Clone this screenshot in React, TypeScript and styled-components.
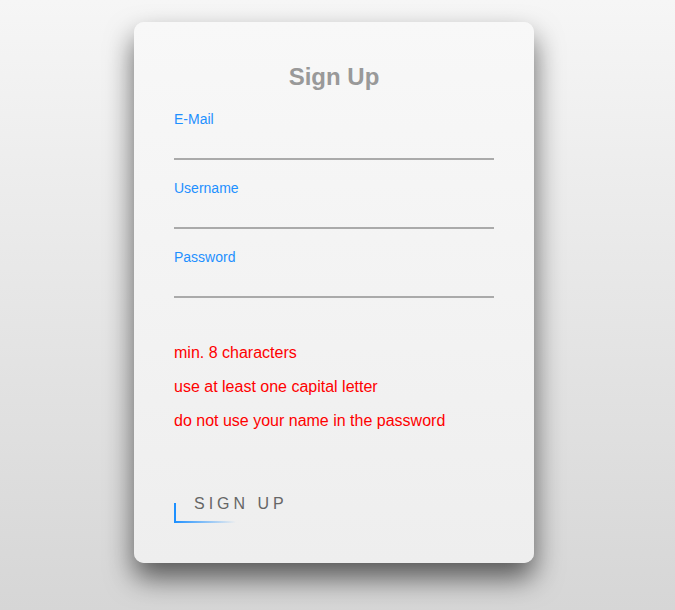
import React from "react";
import styled, { createGlobalStyle } from "styled-components";

const Global = createGlobalStyle`
  html, body { margin: 0; padding: 0; }
  body {
    min-height: 610px;
    background: linear-gradient(to bottom, #f6f6f6 0%, #d6d6d6 100%);
    font-family: "Liberation Sans", Arial, sans-serif;
  }
`;

const Page = styled.div`
  display: flex;
  padding: 22px 0 0 134px;
  min-height: 610px;
  box-sizing: border-box;
`;

const Card = styled.form`
  width: 400px;
  box-sizing: border-box;
  padding: 41px 40px 40px;
  border-radius: 10px;
  background: linear-gradient(to bottom, #f8f8f8 0%, #eeeeee 100%);
  box-shadow: 0 15px 28px rgba(0, 0, 0, 0.6);
  display: flex;
  flex-direction: column;
  align-self: flex-start;
`;

const Title = styled.h2`
  margin: 0 0 19px;
  text-align: center;
  font-size: 24px;
  line-height: 28px;
  font-weight: bold;
  color: #999999;
`;

const Field = styled.div`
  display: flex;
  flex-direction: column;
  margin-bottom: 19px;
`;

const Label = styled.label`
  padding-top: 1px;
  font-size: 14px;
  line-height: 16px;
  color: #1e90ff;
`;

const Input = styled.input`
  width: 320px;
  height: 33px;
  box-sizing: border-box;
  border: none;
  border-bottom: 2px solid #aaaaaa;
  background: transparent;
  outline: none;
  font-family: inherit;
  font-size: 16px;
  padding: 0;
`;

const Rules = styled.div`
  display: flex;
  flex-direction: column;
  gap: 16px;
  margin-top: 27px;
`;

const Rule = styled.p`
  margin: 0;
  font-size: 16px;
  line-height: 18px;
  color: #ff0000;
`;

const Button = styled.button`
  position: relative;
  align-self: flex-start;
  margin-top: 65px;
  padding: 0 0 10px 20px;
  border: none;
  background: transparent;
  font-family: inherit;
  font-size: 16px;
  line-height: 18px;
  letter-spacing: 4px;
  color: #666666;
  cursor: pointer;

  &::before {
    content: "";
    position: absolute;
    left: 0;
    bottom: 0;
    width: 2px;
    height: 20px;
    background: #1e90ff;
  }
  &::after {
    content: "";
    position: absolute;
    left: 0;
    bottom: 0;
    width: 62px;
    height: 2px;
    background: linear-gradient(to right, #1e90ff 0%, rgba(30, 144, 255, 0) 100%);
  }
`;

const fields = [
  { id: "email", label: "E-Mail", type: "email" },
  { id: "username", label: "Username", type: "text" },
  { id: "password", label: "Password", type: "password" },
];

const rules = [
  "min. 8 characters",
  "use at least one capital letter",
  "do not use your name in the password",
];

export default function App() {
  return (
    <>
      <Global />
      <Page>
        <Card onSubmit={(e) => e.preventDefault()}>
          <Title>Sign Up</Title>
          {fields.map((f) => (
            <Field key={f.id}>
              <Label htmlFor={f.id}>{f.label}</Label>
              <Input id={f.id} type={f.type} />
            </Field>
          ))}
          <Rules>
            {rules.map((r) => (
              <Rule key={r}>{r}</Rule>
            ))}
          </Rules>
          <Button type="submit">SIGN UP</Button>
        </Card>
      </Page>
    </>
  );
}
